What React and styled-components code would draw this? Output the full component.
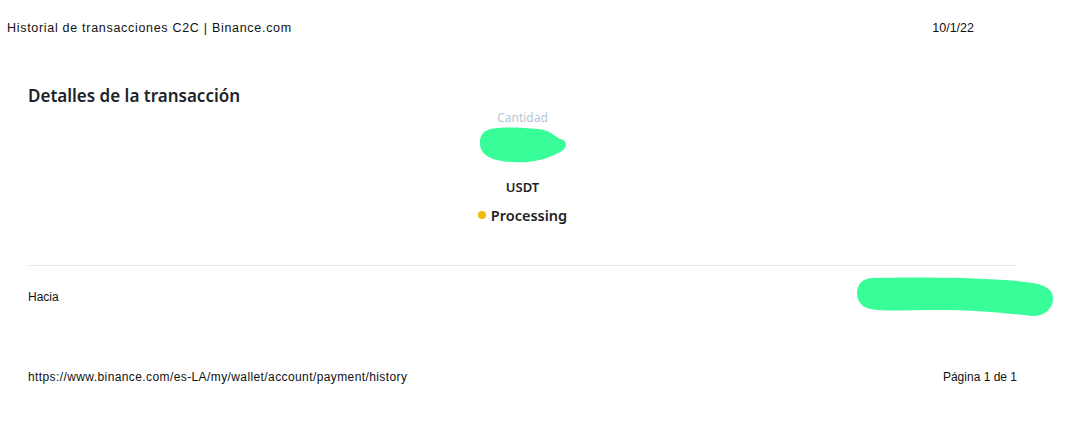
import React from 'react';
import styled, { createGlobalStyle } from 'styled-components';

const Global = createGlobalStyle`
  html, body { margin: 0; padding: 0; background: #fff; }
  body { font-family: "Liberation Sans", Arial, sans-serif; color: #111; }
`;

const Page = styled.div`
  width: 1067px;
  height: 445px;
  box-sizing: border-box;
  padding: 20px 0 0 7px;
  display: flex;
  flex-direction: column;
`;

const PrintHeader = styled.div`
  display: flex;
  justify-content: space-between;
  width: 967px;
  font-size: 12.5px;
  line-height: 16px;
  color: #111;
`;

const HeaderTitle = styled.span`
  letter-spacing: 0.7px;
`;

const Sheet = styled.div`
  margin: 0 0 0 21px;
  width: 989px;
  display: flex;
  flex-direction: column;
`;

const Title = styled.h2`
  margin: 48px 0 0 0;
  font-family: "Noto Sans", sans-serif;
  font-size: 17px;
  font-weight: 600;
  line-height: 24px;
  color: #1e2329;
`;

const Summary = styled.div`
  margin-top: 3px;
  display: flex;
  flex-direction: column;
  align-items: center;
`;

const Label = styled.div`
  font-family: "Noto Sans", sans-serif;
  font-size: 12px;
  line-height: 14px;
  color: #b7c4d4;
`;

const Blob = styled.svg`
  display: block;
`;

const Asset = styled.div`
  margin-top: 15px;
  font-family: "Noto Sans", sans-serif;
  font-size: 13px;
  font-weight: 600;
  line-height: 18px;
  color: #1e2329;
`;

const Status = styled.div`
  margin-top: 9px;
  display: flex;
  align-items: center;
  gap: 5px;
  font-family: "Noto Sans", sans-serif;
  font-size: 14.5px;
  font-weight: 600;
  line-height: 20px;
  color: #1e2329;
`;

const Dot = styled.span`
  width: 8px;
  height: 8px;
  border-radius: 50%;
  background: #f0b90b;
`;

const Divider = styled.hr`
  margin: 40px 0 0 0;
  border: none;
  border-top: 1px solid #e6e6e6;
`;

const Row = styled.div`
  display: flex;
  justify-content: space-between;
  align-items: center;
  margin-top: 9px;
  margin-right: -38px;
`;

const RowLabel = styled.span`
  font-size: 12px;
  color: #111;
`;

const Footer = styled.div`
  display: flex;
  justify-content: space-between;
  margin-top: 51px;
  font-size: 12px;
  line-height: 16px;
  color: #111;
`;

const Url = styled.span`
  letter-spacing: 0.4px;
`;

const Green = '#38fd98';

export default function App() {
  return (
    <>
      <Global />
      <Page>
        <PrintHeader>
          <HeaderTitle>Historial de transacciones C2C | Binance.com</HeaderTitle>
          <span>10/1/22</span>
        </PrintHeader>
        <Sheet>
          <Title>Detalles de la transacción</Title>
          <Summary>
            <Label>Cantidad</Label>
            <Blob width="90" height="38" viewBox="0 0 90 38" preserveAspectRatio="none">
              <path
                d="M6 7 C12 1 40 2 60 4 C72 5 76 11 82 14 C89 15 90 22 84 26 C76 30 68 35 50 37 C30 38 10 36 4 26 C0 18 2 11 6 7 Z"
                fill={Green}
              />
            </Blob>
            <Asset>USDT</Asset>
            <Status>
              <Dot />
              Processing
            </Status>
          </Summary>
          <Divider />
          <Row>
            <RowLabel>Hacia</RowLabel>
            <Blob width="200" height="43" viewBox="0 0 200 43">
              <path
                d="M18 3 C50 2 110 2 150 5 C175 7 192 8 197 18 C201 30 192 42 176 41 C150 38 120 35 80 35 C50 35 25 37 12 33 C2 29 0 18 4 10 C7 5 12 3 18 3 Z"
                fill={Green}
              />
            </Blob>
          </Row>
          <Footer>
            <Url>https://www.binance.com/es-LA/my/wallet/account/payment/history</Url>
            <span>Página 1 de 1</span>
          </Footer>
        </Sheet>
      </Page>
    </>
  );
}
